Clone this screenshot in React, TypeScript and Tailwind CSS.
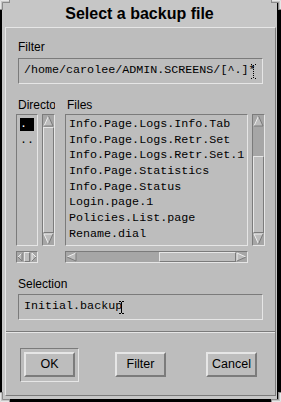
import React from "react";

const sunken =
  "border border-t-[#7b7b7b] border-l-[#7b7b7b] border-b-[#e6e6e6] border-r-[#e6e6e6]";
const raised =
  "border border-t-[#e6e6e6] border-l-[#e6e6e6] border-b-[#7b7b7b] border-r-[#7b7b7b]";

function ArrowV({ dir }: { dir: "up" | "down" }) {
  return (
    <svg width="11" height="12" viewBox="0 0 11 12" className="block">
      {dir === "up" ? (
        <>
          <polygon points="5.5,1 1,11 10,11" fill="#bdbdbd" />
          <path d="M1 11 L5.5 1" stroke="#eeeeee" fill="none" />
          <path d="M5.5 1 L10 11 L1 11" stroke="#7b7b7b" fill="none" />
        </>
      ) : (
        <>
          <polygon points="1,1 10,1 5.5,11" fill="#bdbdbd" />
          <path d="M5.5 11 L1 1 L10 1" stroke="#eeeeee" fill="none" />
          <path d="M10 1 L5.5 11" stroke="#7b7b7b" fill="none" />
        </>
      )}
    </svg>
  );
}

function ArrowH({ dir, w }: { dir: "left" | "right"; w: number }) {
  const x2 = w - 1;
  return (
    <svg width={w} height="10" viewBox={`0 0 ${w} 10`} className="block shrink-0">
      {dir === "left" ? (
        <>
          <polygon points={`1,5 ${x2},1 ${x2},9`} fill="#bdbdbd" />
          <path d={`M1 5 L${x2} 1`} stroke="#eeeeee" fill="none" />
          <path d={`M${x2} 1 L${x2} 9 L1 5`} stroke="#7b7b7b" fill="none" />
        </>
      ) : (
        <>
          <polygon points={`1,1 ${x2},5 1,9`} fill="#bdbdbd" />
          <path d={`M1 9 L1 1 L${x2} 5`} stroke="#eeeeee" fill="none" />
          <path d={`M${x2} 5 L1 9`} stroke="#7b7b7b" fill="none" />
        </>
      )}
    </svg>
  );
}

function VScroll({ offset }: { offset: number }) {
  return (
    <div className={`w-[13px] h-[132px] bg-[#a6a6a6] flex flex-col ${sunken}`}>
      <ArrowV dir="up" />
      <div className="flex-1 flex flex-col">
        <div className="shrink-0" style={{ height: offset }} />
        <div className={`flex-1 bg-[#bdbdbd] ${raised}`} />
      </div>
      <ArrowV dir="down" />
    </div>
  );
}

function Corner({ pos }: { pos: "tl" | "tr" | "bl" | "br" }) {
  const place =
    pos === "tl"
      ? "left-0 top-0"
      : pos === "tr"
      ? "right-0 top-0"
      : pos === "bl"
      ? "left-0 bottom-0"
      : "right-0 bottom-0";
  const rot =
    pos === "tl" ? "" : pos === "tr" ? "scale-x-[-1]" : pos === "bl" ? "scale-y-[-1]" : "scale-[-1]";
  return (
    <svg width="10" height="10" viewBox="0 0 10 10" className={`absolute ${place} ${rot}`}>
      <polygon points="0,0 10,0 10,3 3,3 3,10 0,10" fill="#c6c6c6" />
      <path d="M0.5 10 V0.5 H10" stroke="#e6e6e6" fill="none" />
      <path d="M2.5 10 V2.5 H10" stroke="#8a8a8a" fill="none" />
      <path d="M9.5 0 V3 M0 9.5 H3" stroke="#8a8a8a" fill="none" />
    </svg>
  );
}

const files = [
  "Info.Page.Logs.Info.Tab",
  "Info.Page.Logs.Retr.Set",
  "Info.Page.Logs.Retr.Set.1",
  "Info.Page.Statistics",
  "Info.Page.Status",
  "Login.page.1",
  "Policies.List.page",
  "Rename.dial",
];

const mono = "font-['Liberation_Mono',monospace] text-[11.7px]";

export default function App() {
  return (
    <div className="relative w-[281px] h-[402px] bg-black overflow-hidden font-['Liberation_Sans',Arial,sans-serif] text-black">
      <div className="ml-[2px] w-[275px] h-[399px] bg-[#c6c6c6] flex flex-col">
        <div className="h-[27px] leading-[27px] text-center font-bold text-[16px]">
          Select a backup file
        </div>
        <div className={`ml-[3px] w-[271px] h-[369px] bg-[#bdbdbd] flex flex-col pl-[10px] ${raised}`}>
          {/* Filter */}
          <div className="mt-[12px] h-[14px] leading-[14px] text-[12px] ml-[2px]">Filter</div>
          <div
            className={`mt-[4px] ml-[2px] w-[245px] h-[26px] flex items-center pl-[5px] whitespace-nowrap overflow-hidden ${mono} ${sunken}`}
          >
            <span>/home/carolee/ADMIN.SCREENS/[^.]*</span>
            <svg width="5" height="15" viewBox="0 0 5 15" className="-ml-[4px] shrink-0">
              <path d="M0 0.5h1M4 0.5h1M2.5 1v13M0 14.5h1M4 14.5h1" stroke="#000" strokeDasharray="1 1" fill="none" />
            </svg>
          </div>

          {/* labels */}
          <div className="mt-[14px] h-[14px] leading-[14px] text-[12px] flex">
            <div className="w-[39px] pl-[2px] overflow-hidden whitespace-nowrap">Directories</div>
            <div className="ml-[10px] pl-[2px]">Files</div>
          </div>

          {/* lists */}
          <div className="mt-[2px] h-[132px] flex">
            <div className={`w-[22px] h-[132px] p-[3px] overflow-hidden ${mono} ${sunken}`}>
              <div className="flex flex-col gap-[2.67px]">
                <div className="h-[13px] leading-[13px] bg-black text-white">.</div>
                <div className="h-[13px] leading-[13px]">..</div>
              </div>
            </div>
            <div className="ml-[4px]">
              <VScroll offset={0} />
            </div>
            <div className={`ml-[10px] w-[183px] h-[132px] p-[3px] overflow-hidden whitespace-nowrap ${mono} ${sunken}`}>
              <div className="flex flex-col gap-[2.67px]">
                {files.map((f) => (
                  <div key={f} className="h-[13px] leading-[13px]">
                    {f}
                  </div>
                ))}
              </div>
            </div>
            <div className="ml-[4px]">
              <VScroll offset={29} />
            </div>
          </div>

          {/* horizontal scrollbars */}
          <div className="mt-[5px] h-[12px] flex">
            <div className={`w-[22px] h-[12px] bg-[#a6a6a6] flex ${sunken}`}>
              <ArrowH dir="left" w={6} />
              <div className="w-[1px]" />
              <div className={`w-[6px] bg-[#bdbdbd] ${raised}`} />
              <div className="w-[1px]" />
              <ArrowH dir="right" w={6} />
            </div>
            <div className={`ml-[27px] w-[183px] h-[12px] bg-[#a6a6a6] flex ${sunken}`}>
              <ArrowH dir="left" w={11} />
              <div className="w-[82px]" />
              <div className={`w-[77px] bg-[#bdbdbd] ${raised}`} />
              <ArrowH dir="right" w={11} />
            </div>
          </div>

          {/* Selection */}
          <div className="mt-[14px] h-[14px] leading-[14px] text-[12px] ml-[2px]">Selection</div>
          <div
            className={`mt-[3px] ml-[2px] w-[245px] h-[26px] flex items-center pl-[5px] whitespace-nowrap overflow-hidden ${mono} ${sunken}`}
          >
            <span>Initial.backup</span>
            <svg width="5" height="13" viewBox="0 0 5 13" className="-ml-[3px] shrink-0">
              <path d="M0 0.5h2M3 0.5h2M2.5 1v11M0 12.5h2M3 12.5h2" stroke="#000" fill="none" />
            </svg>
          </div>

          {/* separator */}
          <div className="mt-[11px] -ml-[10px] w-[269px] h-[2px] border-t border-t-[#7b7b7b] border-b border-b-[#e6e6e6]" />

          {/* buttons */}
          <div className="mt-[15px] flex items-start text-[12.5px]">
            <div className={`ml-[4px] w-[59px] h-[34px] pt-[3px] pl-[3px] ${sunken}`}>
              <div className={`w-[51px] h-[25px] flex items-center justify-center border-2 border-t-[#e6e6e6] border-l-[#e6e6e6] border-b-[#7b7b7b] border-r-[#7b7b7b]`}>
                OK
              </div>
            </div>
            <div className={`mt-[4px] ml-[36px] w-[51px] h-[25px] flex items-center justify-center border-2 border-t-[#e6e6e6] border-l-[#e6e6e6] border-b-[#7b7b7b] border-r-[#7b7b7b]`}>
              Filter
            </div>
            <div className={`mt-[4px] ml-[40px] w-[51px] h-[25px] flex items-center justify-center border-2 border-t-[#e6e6e6] border-l-[#e6e6e6] border-b-[#7b7b7b] border-r-[#7b7b7b]`}>
              Cancel
            </div>
          </div>
        </div>
      </div>
      <Corner pos="tl" />
      <Corner pos="tr" />
      <Corner pos="bl" />
      <Corner pos="br" />
    </div>
  );
}
